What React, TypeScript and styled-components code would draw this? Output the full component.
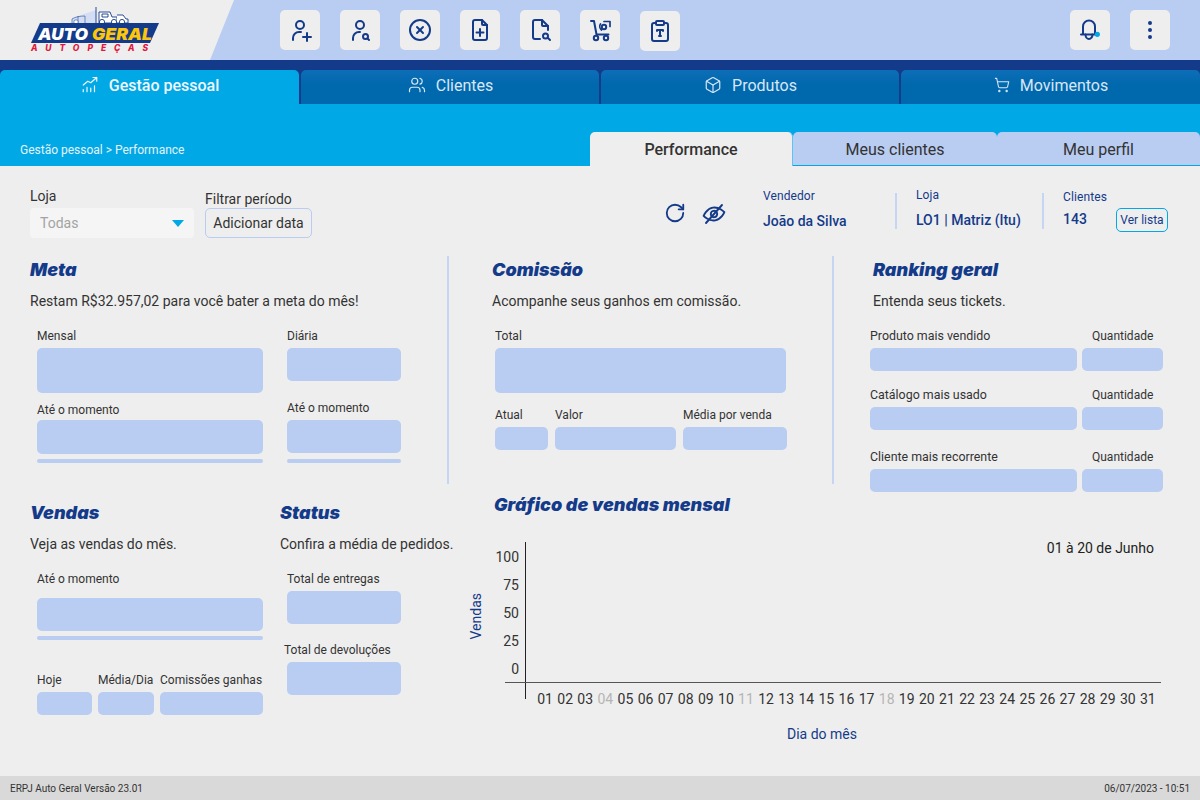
import React from "react";
import styled, { createGlobalStyle } from "styled-components";
import { Box, ClipboardType, RotateCw, ShoppingCart, Users, CircleX } from "lucide-react";

const navy = "#143a8a";
const sky = "#00a8e6";
const pale = "#b9ccf2";
const paper = "#eeeeee";

const GlobalStyle = createGlobalStyle`
  html, body { margin: 0; padding: 0; background: ${paper}; }
  body { font-family: Roboto, "Liberation Sans", sans-serif; color: #333; }
  * { box-sizing: border-box; }
`;

const Page = styled.div`
  width: 1200px;
  height: 800px;
  display: flex;
  flex-direction: column;
  overflow: hidden;
  background: ${paper};
`;

const TopBar = styled.header`
  height: 60px;
  flex: none;
  display: flex;
  align-items: center;
  background: ${pale};
  padding-right: 30px;
`;

const LogoPanel = styled.div`
  width: 234px;
  height: 60px;
  flex: none;
  padding: 7px 0 0 30px;
  background: ${paper};
  clip-path: polygon(0 0, 100% 0, 210px 100%, 0 100%);
`;

const ToolGroup = styled.div`
  display: flex;
  gap: 20px;
  margin-left: 46px;
`;

const RightTools = styled(ToolGroup)`
  margin-left: auto;
`;

const ToolButton = styled.button<{ $drop?: boolean }>`
  width: 40px;
  height: 40px;
  padding: 0;
  border: 0;
  border-radius: 5px;
  background: ${paper};
  color: ${navy};
  display: flex;
  align-items: center;
  justify-content: center;
  margin-top: ${(p) => (p.$drop ? "1px" : "0")};
`;

const MainNav = styled.nav`
  height: 44px;
  flex: none;
  padding-top: 10px;
  display: grid;
  grid-template-columns: 299px 298px 298px 1fr;
  column-gap: 2px;
  background: ${navy};
`;

const MainTab = styled.div<{ $active?: boolean }>`
  display: flex;
  align-items: center;
  justify-content: center;
  gap: 10px;
  padding: 0 0 4px 1px;
  border-radius: 5px 5px 0 0;
  font-size: 16px;
  font-weight: ${(p) => (p.$active ? 500 : 400)};
  color: ${(p) => (p.$active ? "#f2f6fc" : "#d9e6f6")};
  background: ${(p) => (p.$active ? sky : "linear-gradient(#0d6eb8, #0068ac 45%)")};
`;

const SubBand = styled.div`
  height: 62px;
  flex: none;
  display: flex;
  align-items: flex-end;
  justify-content: space-between;
  background: ${sky};
`;

const Crumb = styled.span`
  margin: 0 0 9px 20px;
  font-size: 12px;
  line-height: 14px;
  color: #e6f3fb;
`;

const SubTabs = styled.div`
  display: grid;
  grid-template-columns: 203px 204px 203px;
  height: 34px;
`;

const SubTab = styled.div<{ $active?: boolean }>`
  display: flex;
  align-items: center;
  justify-content: center;
  padding-top: 1px;
  border-radius: 5px 5px 0 0;
  font-size: 16px;
  font-weight: ${(p) => (p.$active ? 500 : 400)};
  color: #333;
  background: ${(p) => (p.$active ? paper : pale)};
  border-bottom: ${(p) => (p.$active ? "0" : `1px solid ${sky}`)};
  border-right: ${(p) => (p.$active ? `1px solid #5ec4ee` : "0")};
`;

const Content = styled.main`
  flex: 1;
  display: flex;
  flex-direction: column;
  min-height: 0;
`;

const FilterBar = styled.div`
  height: 90px;
  flex: none;
  display: flex;
  padding: 0 32px 0 30px;
`;

const FilterField = styled.div`
  display: flex;
  flex-direction: column;
  justify-content: flex-end;
  height: 72px;
  margin-right: 11px;
`;

const FilterLabel = styled.span<{ $lift: number }>`
  font-size: 14px;
  line-height: 18px;
  margin-bottom: ${(p) => p.$lift}px;
  color: #333;
`;

const SelectBox = styled.div`
  width: 164px;
  height: 30px;
  padding: 0 10px;
  display: flex;
  align-items: center;
  justify-content: space-between;
  border-radius: 4px;
  background: #f5f5f5;
  font-size: 14px;
  color: #a3a3a3;
`;

const Caret = styled.i`
  width: 0;
  height: 0;
  border-left: 6px solid transparent;
  border-right: 6px solid transparent;
  border-top: 7px solid ${sky};
`;

const DateButton = styled.button`
  width: 107px;
  height: 30px;
  padding: 0;
  border: 1px solid ${pale};
  border-radius: 5px;
  background: ${paper};
  font: 400 14px Roboto, sans-serif;
  color: #333;
`;

const IconPair = styled.div`
  margin-left: auto;
  height: 62px;
  padding-top: 36px;
  display: flex;
  gap: 16px;
  color: ${navy};
`;

const InfoCell = styled.div<{ $width: number; $line?: boolean; $top: number; $lead?: number }>`
  width: ${(p) => p.$width}px;
  height: 36px;
  margin-top: 27px;
  margin-left: ${(p) => p.$lead ?? 0}px;
  padding-left: ${(p) => (p.$line ? 19 : 20)}px;
  border-left: ${(p) => (p.$line ? `2px solid #c5d5f3` : "0")};
  display: flex;
  flex-direction: column;
  color: ${navy};
  & > span:first-child {
    margin-top: ${(p) => p.$top}px;
  }
`;

const InfoLabel = styled.span`
  font-size: 12px;
  line-height: 14px;
  letter-spacing: 0.1px;
`;

const InfoValue = styled.span<{ $top?: number }>`
  margin-top: ${(p) => p.$top ?? 10}px;
  margin-bottom: ${(p) => (p.$top === 0 ? 2 : 0)}px;
  font-size: 14px;
  line-height: 16px;
  font-weight: 500;
  white-space: nowrap;
`;

const ClientRow = styled.div`
  display: flex;
  align-items: center;
  justify-content: space-between;
  margin-top: 4px;
`;

const ListButton = styled.button`
  width: 52px;
  height: 24px;
  padding: 0;
  border: 1px solid ${sky};
  border-radius: 5px;
  background: transparent;
  font: 400 12px Roboto, sans-serif;
  color: ${navy};
`;

const Board = styled.div`
  flex: 1;
  display: grid;
  grid-template-columns: 447px 1fr;
`;

const LeftColumn = styled.div`
  padding-left: 30px;
  display: flex;
  flex-direction: column;
`;

const RightColumn = styled.div`
  display: flex;
  flex-direction: column;
`;

const UpperRow = styled.div`
  display: grid;
  grid-template-columns: 385px 1fr;
`;

const Panel = styled.section<{ $inset?: number; $rule?: boolean }>`
  height: 228px;
  padding-top: 2px;
  padding-left: ${(p) => p.$inset ?? 0}px;
  border-left: ${(p) => (p.$rule ? `2px solid #c5d5f3` : "0")};
`;

const Title = styled.h2`
  margin: 1px 0 -1px;
  font-family: Inter, Roboto, sans-serif;
  font-size: 18px;
  line-height: 22px;
  font-weight: 900;
  font-style: italic;
  color: ${navy};
  white-space: nowrap;
`;

const Lead = styled.p`
  margin: 12px 0 18px;
  font-size: 14px;
  line-height: 18px;
  color: #333;
  white-space: nowrap;
`;

const FieldRow = styled.div<{ $gap?: number; $top?: number; $left?: number }>`
  display: flex;
  gap: ${(p) => p.$gap ?? 6}px;
  margin-top: ${(p) => p.$top ?? 0}px;
  margin-left: ${(p) => p.$left ?? 0}px;
`;

const Stack = styled.div<{ $width: number }>`
  width: ${(p) => p.$width}px;
  display: flex;
  flex-direction: column;
`;

const Label = styled.span<{ $gap?: number; $top?: number; $shift?: number; $size?: number }>`
  height: 16px;
  margin-top: ${(p) => p.$top ?? 0}px;
  margin-bottom: ${(p) => p.$gap ?? 4}px;
  margin-left: ${(p) => p.$shift ?? 0}px;
  font-size: ${(p) => p.$size ?? 12}px;
  line-height: 16px;
  color: #333;
  white-space: nowrap;
`;

const Slot = styled.div<{ $height: number }>`
  height: ${(p) => p.$height}px;
  border-radius: 5px;
  background: ${pale};
`;

const Meter = styled.div<{ $top: number }>`
  height: 4px;
  margin-top: ${(p) => p.$top}px;
  border-radius: 2px;
  background: ${pale};
`;

const LowerLeft = styled.div`
  display: grid;
  grid-template-columns: 250px 1fr;
  margin-top: 17px;
`;

const ChartPanel = styled.section`
  margin: 9px 0 0 47px;
`;

const DateRange = styled.div`
  width: 660px;
  margin-top: 23px;
  height: 20px;
  text-align: right;
  font-size: 14px;
  line-height: 20px;
  color: #222;
`;

const Plot = styled.div`
  position: relative;
  width: 668px;
  margin-top: -14px;
  padding: 146px 0 0 41px;
`;

const Axes = styled.svg`
  position: absolute;
  left: -2px;
  top: -2px;
`;

const YScale = styled.div`
  position: absolute;
  left: 0;
  top: -1px;
  width: 25px;
  display: grid;
  grid-auto-rows: 28px;
  text-align: right;
  font-size: 14px;
  line-height: 28px;
  color: #333;
`;

const YTitle = styled.span`
  position: absolute;
  left: -26px;
  top: 49px;
  font-size: 14px;
  line-height: 16px;
  color: ${navy};
  writing-mode: vertical-rl;
  transform: rotate(180deg);
`;

const XScale = styled.div`
  display: grid;
  grid-template-columns: repeat(31, 20.1px);
  font-size: 14px;
  line-height: 18px;
  text-align: center;
`;

const Day = styled.span<{ $muted: boolean }>`
  color: ${(p) => (p.$muted ? "#b5b5b5" : "#333")};
`;

const XTitle = styled.div`
  width: 656px;
  margin-top: 17px;
  text-align: center;
  font-size: 14px;
  line-height: 18px;
  color: ${navy};
`;

const Footer = styled.footer`
  height: 24px;
  flex: none;
  display: flex;
  align-items: center;
  justify-content: space-between;
  padding: 0 10px;
  background: #d9d9d9;
  font-size: 10px;
  color: #333;
`;

const Ico = ({ children, size = 24 }: { children: React.ReactNode; size?: number }) => (
  <svg width={size} height={size} viewBox="0 0 24 24" fill="none" stroke="currentColor" strokeWidth="2" strokeLinecap="round" strokeLinejoin="round">
    {children}
  </svg>
);

const Logo = () => (
  <svg width="132" height="46" viewBox="0 0 132 46" fill="none">
    <path d="M42 16v-5l24-8v13z" fill="#d3def5" />
    <g stroke={navy} strokeWidth="0.9">
      <path d="M42 16v-4c3-2 8-3 13-3M48 9v7M55 9v7" strokeOpacity="0.6" />
      <path d="M66 -1v17M69 5h11l2 5h5v6H69z" fill="#fff" />
      <path d="M72 7h6v3h-6z" />
      <path d="M87 8h6l3 4h2v4H87" fill="#fff" />
      <circle cx="72" cy="15" r="2.600" fill="#fff" />
      <circle cx="84" cy="15" r="2.600" fill="#fff" />
      <circle cx="92" cy="15" r="2.600" fill="#fff" />
      <circle cx="46" cy="15" r="2.200" fill="#fff" strokeOpacity="0.6" />
    </g>
    <polygon points="1,36 10,16 129,16 120,36" fill={navy} />
    <text x="8" y="33" fontFamily="Inter" fontWeight="900" fontStyle="italic" fontSize="16.500" fill="#fff" textLength="50" lengthAdjust="spacingAndGlyphs">AUTO</text>
    <text x="62" y="33" fontFamily="Inter" fontWeight="900" fontStyle="italic" fontSize="16.500" fill="#fcc60d" textLength="60" lengthAdjust="spacingAndGlyphs">GERAL</text>
    <text x="1" y="44" fontFamily="Inter" fontWeight="800" fontStyle="italic" fontSize="8.500" fill="#e0163c" textLength="117">AUTOPEÇAS</text>
  </svg>
);

const ChartUp = () => (
  <Ico size={18}>
    <g strokeWidth="1.600">
      <path d="M3 12l6-5 4 2 8-7M16 2h5v5" />
      <path d="M3 21v-3M8 21v-6M13 21v-5M18 21v-8" />
    </g>
  </Ico>
);

const days = Array.from({ length: 31 }, (_, i) => String(i + 1).padStart(2, "0"));
const muted = ["04", "11", "18"];

export default function App() {
  return (
    <Page>
      <GlobalStyle />
      <TopBar>
        <LogoPanel>
          <Logo />
        </LogoPanel>
        <ToolGroup>
          <ToolButton>
            <Ico>
              <circle cx="12" cy="7" r="4" />
              <path d="M5 22v-2a6 6 0 0 1 6-6h2M15 19h8M19 15v8" />
            </Ico>
          </ToolButton>
          <ToolButton>
            <Ico>
              <circle cx="12" cy="7" r="4" />
              <path d="M5 22v-2a6 6 0 0 1 6-6h1M21 22l-1.500-1.500" />
              <circle cx="17.500" cy="18.500" r="2.500" />
            </Ico>
          </ToolButton>
          <ToolButton>
            <CircleX size={24} />
          </ToolButton>
          <ToolButton>
            <Ico>
              <path d="M14 2H7a2 2 0 0 0-2 2v16a2 2 0 0 0 2 2h10a2 2 0 0 0 2-2V7z" />
              <path d="M14 2v4a1 1 0 0 0 1 1h4M12 11v7M8.500 14.500h7" />
            </Ico>
          </ToolButton>
          <ToolButton>
            <Ico>
              <path d="M13 2H7a2 2 0 0 0-2 2v15a2 2 0 0 0 2 2h5M20 12V8l-6-6" />
              <path d="M14 2v5a1 1 0 0 0 1 1h5M22 22l-2-2" />
              <circle cx="17.500" cy="18" r="2.500" />
            </Ico>
          </ToolButton>
          <ToolButton>
            <Ico>
              <path d="M3 3h3l2.500 13.500h12" />
              <circle cx="8" cy="20" r="2.200" />
              <circle cx="18" cy="20" r="2.200" />
              <circle cx="16" cy="9" r="2.200" />
              <path d="M16 3.500h6v5M12.500 6a4.500 4.500 0 0 0 1 6" strokeWidth="1.700" />
            </Ico>
          </ToolButton>
          <ToolButton $drop>
            <ClipboardType size={24} />
          </ToolButton>
        </ToolGroup>
        <RightTools>
          <ToolButton>
            <Ico>
              <path d="M3 16.500h15M5 16.500V8.500a6 6 0 0 1 12 0v8" />
              <path d="M7.500 16.500a3.500 4.500 0 0 0 7 0" />
              <circle cx="19.300" cy="16.300" r="2.600" fill={sky} stroke="none" />
            </Ico>
          </ToolButton>
          <ToolButton>
            <Ico>
              <circle cx="12" cy="5" r="1" />
              <circle cx="12" cy="12" r="1" />
              <circle cx="12" cy="19" r="1" />
            </Ico>
          </ToolButton>
        </RightTools>
      </TopBar>

      <MainNav>
        <MainTab $active>
          <ChartUp />
          Gestão pessoal
        </MainTab>
        <MainTab>
          <Users size={18} strokeWidth={1.600} />
          Clientes
        </MainTab>
        <MainTab>
          <Box size={18} strokeWidth={1.600} />
          Produtos
        </MainTab>
        <MainTab>
          <ShoppingCart size={16} strokeWidth={1.600} />
          Movimentos
        </MainTab>
      </MainNav>

      <SubBand>
        <Crumb>Gestão pessoal &gt; Performance</Crumb>
        <SubTabs>
          <SubTab $active>Performance</SubTab>
          <SubTab>Meus clientes</SubTab>
          <SubTab>Meu perfil</SubTab>
        </SubTabs>
      </SubBand>

      <Content>
        <FilterBar>
          <FilterField>
            <FilterLabel $lift={3}>Loja</FilterLabel>
            <SelectBox>
              Todas
              <Caret />
            </SelectBox>
          </FilterField>
          <FilterField>
            <FilterLabel $lift={0}>Filtrar período</FilterLabel>
            <DateButton>Adicionar data</DateButton>
          </FilterField>
          <IconPair>
            <RotateCw size={22} strokeWidth={2} />
            <svg width="24" height="24" viewBox="0 0 24 24" fill="none" stroke="currentColor" strokeWidth="1.900" strokeLinecap="round">
              <g transform="rotate(-10 12 12)">
                <path d="M1.500 12s4-6.500 10.500-6.500S22.500 12 22.500 12s-4 6.500-10.500 6.500S1.500 12 1.500 12z" />
                <circle cx="12" cy="12" r="3.200" />
              </g>
              <path d="M20 3L4 21" />
            </svg>
          </IconPair>
          <InfoCell $width={152} $top={-4} $lead={17}>
            <InfoLabel>Vendedor</InfoLabel>
            <InfoValue>João da Silva</InfoValue>
          </InfoCell>
          <InfoCell $width={147} $line $top={-5}>
            <InfoLabel>Loja</InfoLabel>
            <InfoValue>LO1 | Matriz (Itu)</InfoValue>
          </InfoCell>
          <InfoCell $width={126} $line $top={-3}>
            <InfoLabel>Clientes</InfoLabel>
            <ClientRow>
              <InfoValue $top={0}>143</InfoValue>
              <ListButton>Ver lista</ListButton>
            </ClientRow>
          </InfoCell>
        </FilterBar>

        <Board>
          <LeftColumn>
            <Panel>
              <Title>Meta</Title>
              <Lead>Restam R$32.957,02 para você bater a meta do mês!</Lead>
              <FieldRow $gap={24} $left={7}>
                <Stack $width={226}>
                  <Label>Mensal</Label>
                  <Slot $height={45} />
                  <Label $top={9} $gap={2}>Até o momento</Label>
                  <Slot $height={34} />
                  <Meter $top={5} />
                </Stack>
                <Stack $width={114}>
                  <Label>Diária</Label>
                  <Slot $height={33} />
                  <Label $top={19}>Até o momento</Label>
                  <Slot $height={33} />
                  <Meter $top={6} />
                </Stack>
              </FieldRow>
            </Panel>
            <LowerLeft>
              <div>
                <Title>Vendas</Title>
                <Lead>Veja as vendas do mês.</Lead>
                <FieldRow $left={7}>
                  <Stack $width={226}>
                    <Label $gap={11}>Até o momento</Label>
                    <Slot $height={33} />
                    <Meter $top={5} />
                  </Stack>
                </FieldRow>
                <FieldRow $left={7} $top={32}>
                  <Stack $width={55}>
                    <Label>Hoje</Label>
                    <Slot $height={23} />
                  </Stack>
                  <Stack $width={56}>
                    <Label>Média/Dia</Label>
                    <Slot $height={23} />
                  </Stack>
                  <Stack $width={103}>
                    <Label>Comissões ganhas</Label>
                    <Slot $height={23} />
                  </Stack>
                </FieldRow>
              </div>
              <div>
                <Title>Status</Title>
                <Lead>Confira a média de pedidos.</Lead>
                <FieldRow $left={7}>
                  <Stack $width={114}>
                    <Label>Total de entregas</Label>
                    <Slot $height={33} />
                    <Label $top={18} $shift={-3}>Total de devoluções</Label>
                    <Slot $height={33} />
                  </Stack>
                </FieldRow>
              </div>
            </LowerLeft>
          </LeftColumn>

          <RightColumn>
            <UpperRow>
              <Panel $inset={43} $rule>
                <Title>Comissão</Title>
                <Lead>Acompanhe seus ganhos em comissão.</Lead>
                <FieldRow $left={3}>
                  <Stack $width={291}>
                    <Label>Total</Label>
                    <Slot $height={45} />
                  </Stack>
                </FieldRow>
                <FieldRow $left={3} $top={14} $gap={7}>
                  <Stack $width={53}>
                    <Label>Atual</Label>
                    <Slot $height={23} />
                  </Stack>
                  <Stack $width={121}>
                    <Label>Valor</Label>
                    <Slot $height={23} />
                  </Stack>
                  <Stack $width={104}>
                    <Label>Média por venda</Label>
                    <Slot $height={23} />
                  </Stack>
                </FieldRow>
              </Panel>
              <Panel $inset={39} $rule>
                <Title>Ranking geral</Title>
                <Lead>Entenda seus tickets.</Lead>
                <FieldRow $left={-3} $gap={5}>
                  <Stack $width={207}>
                    <Label $size={12.4}>Produto mais vendido</Label>
                    <Slot $height={23} />
                    <Label $top={16} $size={12.4}>Catálogo mais usado</Label>
                    <Slot $height={23} />
                    <Label $top={19} $size={12.4}>Cliente mais recorrente</Label>
                    <Slot $height={23} />
                  </Stack>
                  <Stack $width={81}>
                    <Label $shift={10}>Quantidade</Label>
                    <Slot $height={23} />
                    <Label $top={16} $shift={10}>Quantidade</Label>
                    <Slot $height={23} />
                    <Label $top={19} $shift={10}>Quantidade</Label>
                    <Slot $height={23} />
                  </Stack>
                </FieldRow>
              </Panel>
            </UpperRow>
            <ChartPanel>
              <Title>Gráfico de vendas mensal</Title>
              <DateRange>01 à 20 de Junho</DateRange>
              <Plot>
                <Axes width="670" height="170" viewBox="0 0 670 170">
                  <path d="M33.500 0V157" stroke="#222" strokeWidth="1" />
                  <path d="M13 140.500H669" stroke="#555" strokeWidth="1" />
                </Axes>
                <YTitle>Vendas</YTitle>
                <YScale>
                  <span>100</span>
                  <span>75</span>
                  <span>50</span>
                  <span>25</span>
                  <span>0</span>
                </YScale>
                <XScale>
                  {days.map((d) => (
                    <Day key={d} $muted={muted.includes(d)}>{d}</Day>
                  ))}
                </XScale>
              </Plot>
              <XTitle>Dia do mês</XTitle>
            </ChartPanel>
          </RightColumn>
        </Board>
      </Content>

      <Footer>
        <span>ERPJ Auto Geral Versão 23.01</span>
        <span>06/07/2023 - 10:51</span>
      </Footer>
    </Page>
  );
}
